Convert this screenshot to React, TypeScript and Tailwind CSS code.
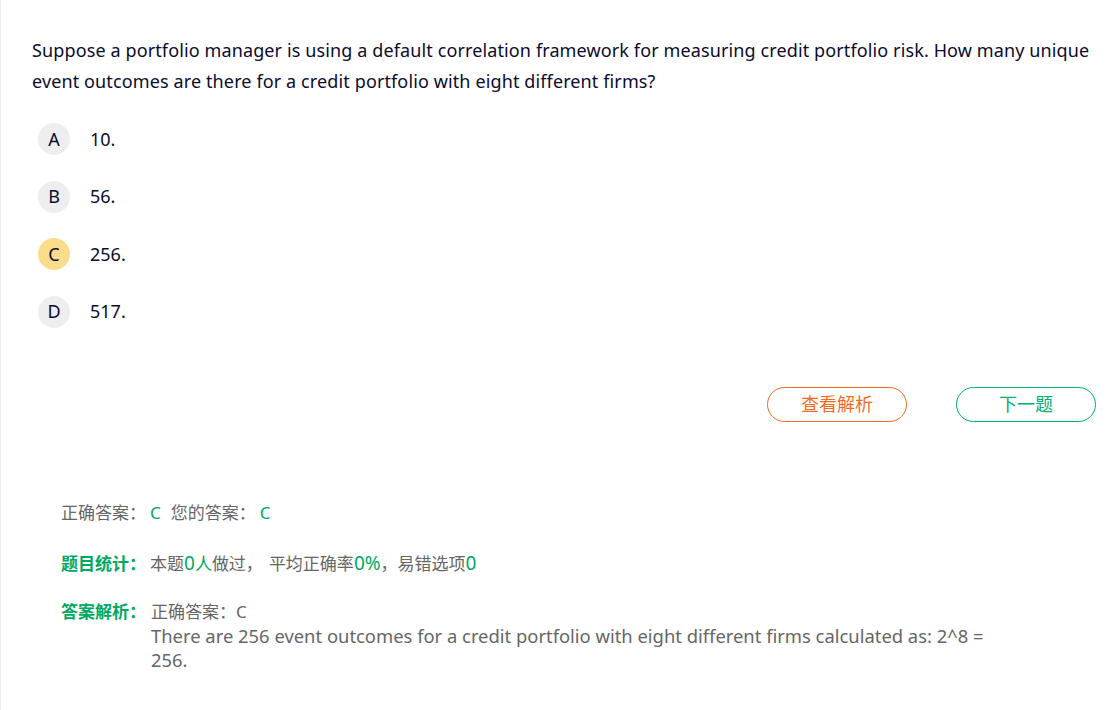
import React from "react";

const options = [
  { key: "A", text: "10.", picked: false },
  { key: "B", text: "56.", picked: false },
  { key: "C", text: "256.", picked: true },
  { key: "D", text: "517.", picked: false },
];

export default function App() {
  return (
    <div
      className="min-h-[710px] w-[1109px] border-l border-[#eeeeee] bg-white"
      style={{ fontFamily: '"Noto Sans", "Noto Sans CJK SC", sans-serif' }}
    >
      {/* Question */}
      <div className="pl-[31px] pr-[12px] pt-[35px]">
        <p className="text-[18px] leading-[31px] tracking-[0.12px] text-[#0b0b2e]">
          Suppose a portfolio manager is using a default correlation framework for measuring credit portfolio risk. How many unique event outcomes are there for a credit portfolio with eight different firms?
        </p>

        {/* Options */}
        <div className="mt-[26px] flex flex-col gap-[25.5px] pl-[6px]">
          {options.map((o) => (
            <div key={o.key} className="flex items-center">
              <span
                className={`flex h-[32px] w-[32px] items-center justify-center rounded-full text-[18px] text-[#0b0b2e] ${
                  o.picked ? "bg-[#fbdc8a]" : "bg-[#eeeeef]"
                }`}
              >
                {o.key}
              </span>
              <span className="ml-[20px] text-[18px] text-[#0b0b2e]">{o.text}</span>
            </div>
          ))}
        </div>
      </div>

      {/* Buttons */}
      <div className="mt-[59px] flex justify-end gap-[49px] pr-[13px]">
        <button className="h-[35px] w-[140px] rounded-full border border-[#f26b1d] text-[18px] text-[#f26b1d]">
          查看解析
        </button>
        <button className="h-[35px] w-[140px] rounded-full border border-[#00b06b] text-[18px] text-[#00b06b]">
          下一题
        </button>
      </div>

      {/* Result */}
      <div className="mt-[79px] pl-[60px] text-[17px] text-[#666666]">
        <div className="leading-[24px]">
          正确答案：<span className="ml-[4px] text-[#00a862]">C</span>
          <span className="ml-[10px]">您的答案：</span>
          <span className="ml-[4px] text-[#00a862]">C</span>
        </div>

        <div className="mt-[26px] leading-[24px]">
          <span className="font-bold text-[#00a862]">题目统计：</span>
          <span className="ml-[4px]">本题</span>
          <span className="text-[#00a862]"><span className="text-[19px]">0</span>人</span>做过，
          <span className="ml-[6px]">平均正确率</span>
          <span className="text-[19px] text-[#00a862]">0%</span>，易错选项
          <span className="text-[19px] text-[#00a862]">0</span>
        </div>

        <div className="mt-[24px] flex leading-[24px]">
          <span className="mr-[5px] shrink-0 font-bold text-[#00a862]">答案解析：</span>
          <div className="w-[845px]">
            <div>正确答案：C</div>
            <div className="text-[18.4px]">
              There are 256 event outcomes for a credit portfolio with eight different firms calculated as: 2^8 = 256.
            </div>
          </div>
        </div>
      </div>
    </div>
  );
}
